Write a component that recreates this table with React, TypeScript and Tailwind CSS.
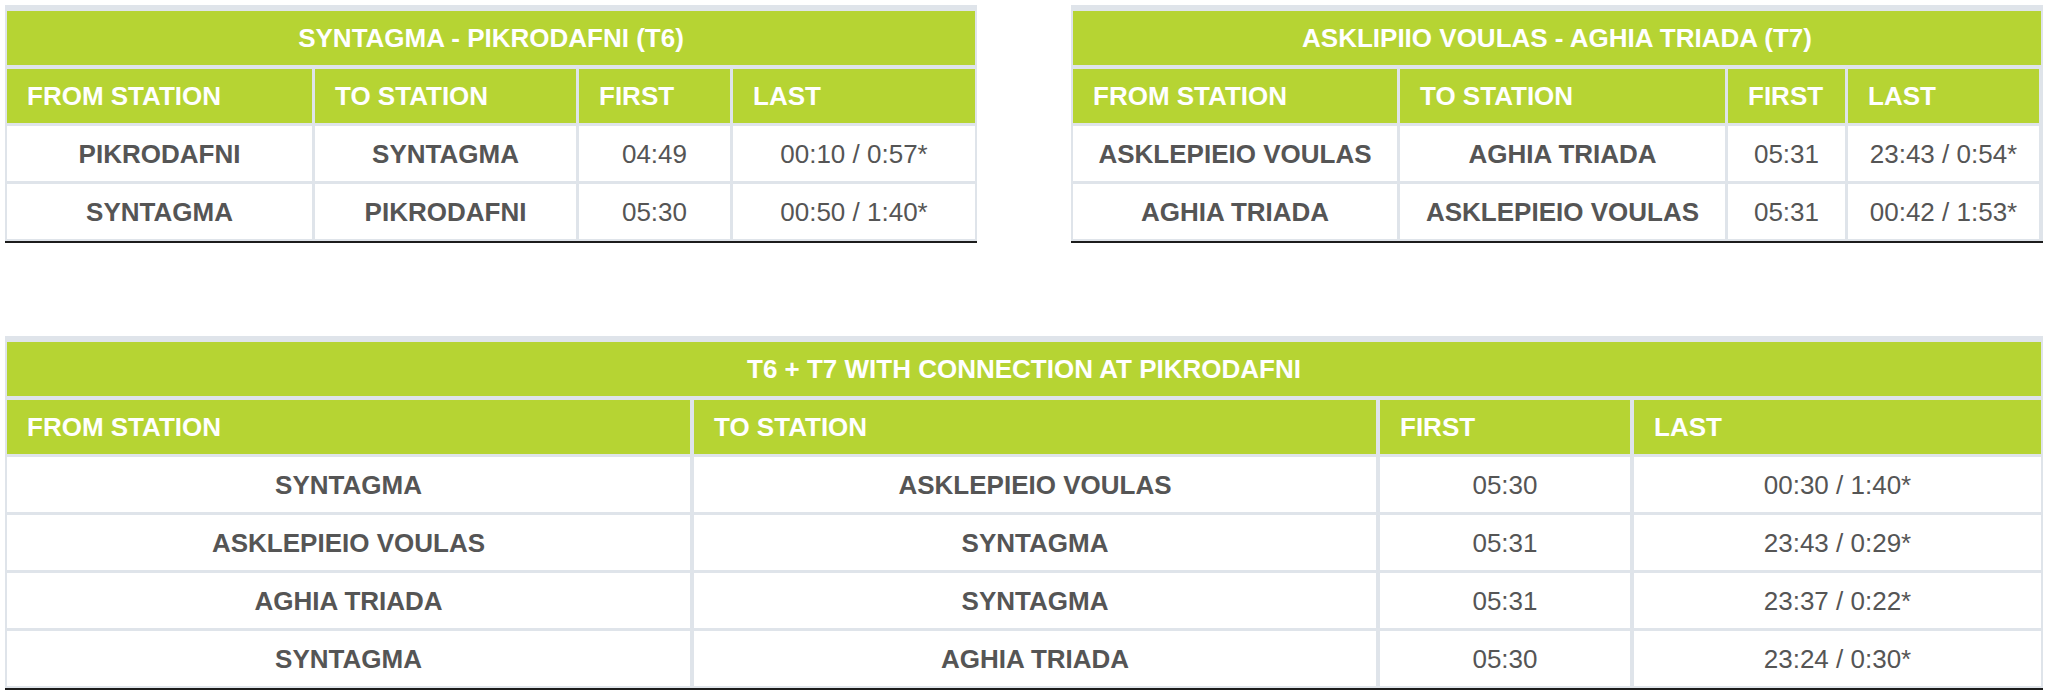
import React from "react";

type Row = [string, string, string, string];

type TableProps = {
    title: string;
    cols: string;
    gap: string;
    rows: Row[];
    className?: string;
};

const headers = ["FROM STATION", "TO STATION", "FIRST", "LAST"];

function Timetable({title, cols, gap, rows, className}: TableProps) {
    return (
        <div className={`bg-[#dfe4ea] pt-[6px] px-[2px] border-b-2 border-[#1c1c1c] ${className ?? ""}`}>
            <div className="h-[54px] bg-[#b6d433] text-white font-bold flex items-center justify-center">
                {title}
            </div>
            <div className={`grid ${cols} ${gap} mt-[4px]`}>
                {headers.map((h) => (
                    <div key={h} className="h-[54px] bg-[#b6d433] text-white font-bold flex items-center pl-[20px]">
                        {h}
                    </div>
                ))}
            </div>
            <div className="flex flex-col gap-[3px] pt-[3px] pb-[2px]">
                {rows.map((r, i) => (
                    <div key={i} className={`grid ${cols} ${gap}`}>
                        <div className="h-[55px] bg-white flex items-center justify-center font-bold text-[#555]">{r[0]}</div>
                        <div className="h-[55px] bg-white flex items-center justify-center font-bold text-[#555]">{r[1]}</div>
                        <div className="h-[55px] bg-white flex items-center justify-center text-[#555]">{r[2]}</div>
                        <div className="h-[55px] bg-white flex items-center justify-center text-[#555]">{r[3]}</div>
                    </div>
                ))}
            </div>
        </div>
    );
}

export default function App() {
    return (
        <div className="bg-white w-[2048px] h-[690px] pt-[5px] px-[5px] text-[26px] leading-none" style={{fontFamily: '"Liberation Sans", Arial, sans-serif'}}>
            <div className="flex gap-[94px]">
                <Timetable
                    className="w-[972px]"
                    title="SYNTAGMA - PIKRODAFNI (T6)"
                    cols="grid-cols-[305px_261px_151px_242px]"
                    gap="gap-x-[3px]"
                    rows={[
                        ["PIKRODAFNI", "SYNTAGMA", "04:49", "00:10 / 0:57*"],
                        ["SYNTAGMA", "PIKRODAFNI", "05:30", "00:50 / 1:40*"],
                    ]}
                />
                <Timetable
                    className="w-[972px]"
                    title="ASKLIPIIO VOULAS - AGHIA TRIADA (T7)"
                    cols="grid-cols-[324px_325px_117px_191px]"
                    gap="gap-x-[3px]"
                    rows={[
                        ["ASKLEPIEIO VOULAS", "AGHIA TRIADA", "05:31", "23:43 / 0:54*"],
                        ["AGHIA TRIADA", "ASKLEPIEIO VOULAS", "05:31", "00:42 / 1:53*"],
                    ]}
                />
            </div>
            <Timetable
                className="w-[2038px] mt-[93px]"
                title="T6 + T7 WITH CONNECTION AT PIKRODAFNI"
                cols="grid-cols-[683px_682px_250px_407px]"
                gap="gap-x-[4px]"
                rows={[
                    ["SYNTAGMA", "ASKLEPIEIO VOULAS", "05:30", "00:30 / 1:40*"],
                    ["ASKLEPIEIO VOULAS", "SYNTAGMA", "05:31", "23:43 / 0:29*"],
                    ["AGHIA TRIADA", "SYNTAGMA", "05:31", "23:37 / 0:22*"],
                    ["SYNTAGMA", "AGHIA TRIADA", "05:30", "23:24 / 0:30*"],
                ]}
            />
        </div>
    );
}
